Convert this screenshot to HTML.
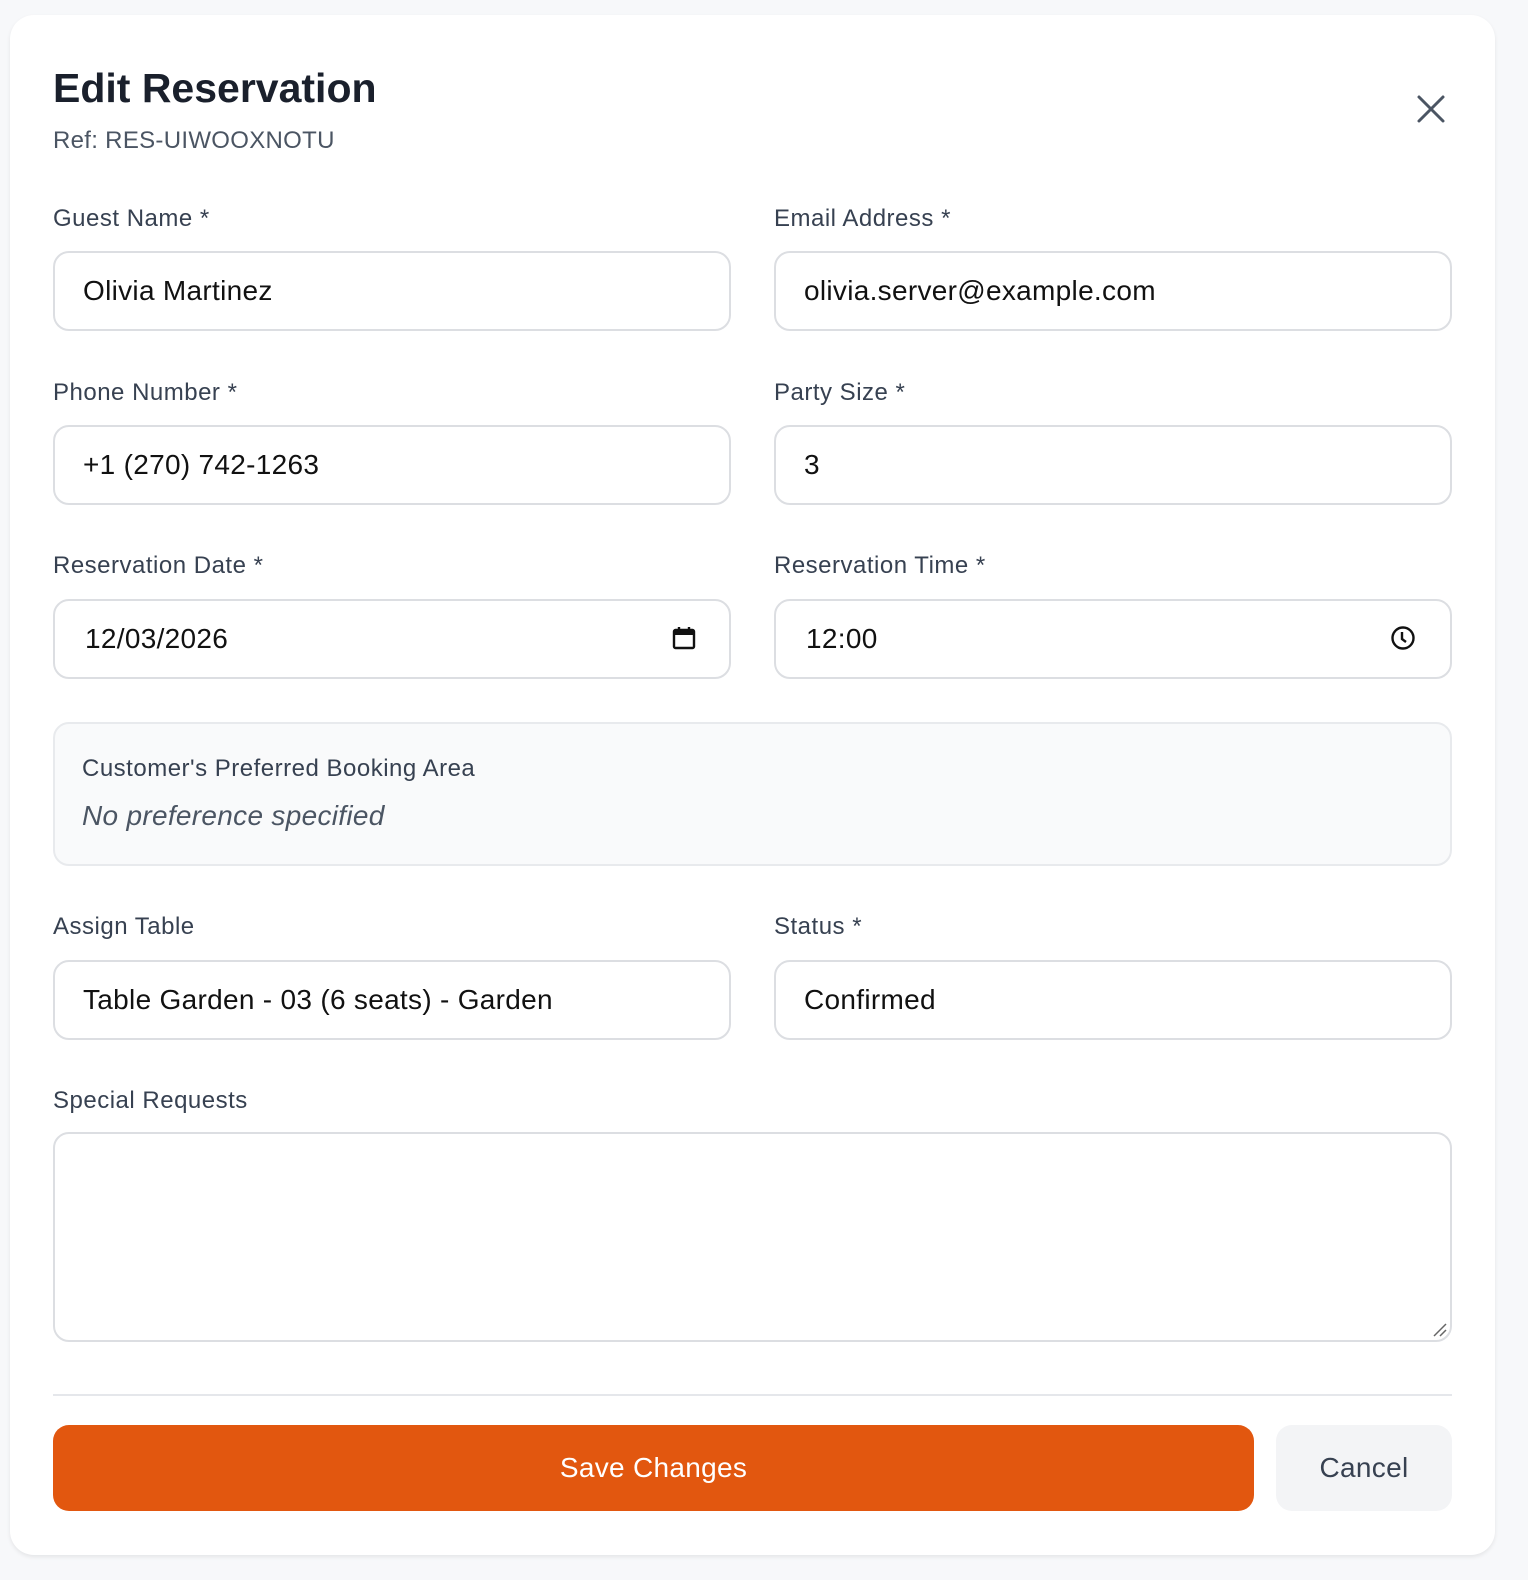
<!DOCTYPE html>
<html><head><meta charset="utf-8"><style>
*{box-sizing:border-box;margin:0;padding:0}
body{width:1528px;height:1580px;background:#f7f8fa;font-family:"Liberation Sans",sans-serif;position:relative;overflow:hidden}
.card{position:absolute;left:10px;top:15px;width:1485px;height:1540px;background:#fff;border-radius:24px;box-shadow:0 2px 4px rgba(0,0,0,.08)}
.a{position:absolute}
.lbl{position:absolute;font-size:24px;color:#374151;line-height:28px;letter-spacing:0.5px}
.in{position:absolute;height:80px;border:2px solid #dcdee2;border-radius:16px;font-size:28px;color:#111;line-height:76px;padding-left:28px;letter-spacing:0.3px}
.l{left:53px;width:678px}.r{left:774px;width:678px}
</style></head><body>
<div class="card"></div>
<div class="a" style="left:53px;top:64px;font-size:41px;font-weight:bold;color:#1a202c;line-height:48px">Edit Reservation</div>
<div class="a" style="left:53px;top:127px;font-size:24px;color:#4b5563;line-height:28px;letter-spacing:0.3px">Ref: RES-UIWOOXNOTU</div>
<svg class="a" style="left:1416px;top:94px" width="30" height="30" viewBox="0 0 30 30"><path d="M3 3L27 27M27 3L3 27" stroke="#4b5563" stroke-width="3" stroke-linecap="round"/></svg>

<div class="lbl" style="left:53px;top:205px">Guest Name *</div>
<div class="lbl" style="left:774px;top:205px">Email Address *</div>
<div class="in l" style="top:251px">Olivia Martinez</div>
<div class="in r" style="top:251px">olivia.server@example.com</div>

<div class="lbl" style="left:53px;top:379px">Phone Number *</div>
<div class="lbl" style="left:774px;top:379px">Party Size *</div>
<div class="in l" style="top:425px">+1 (270) 742-1263</div>
<div class="in r" style="top:425px">3</div>

<div class="lbl" style="left:53px;top:552px">Reservation Date *</div>
<div class="lbl" style="left:774px;top:552px">Reservation Time *</div>
<div class="in l" style="top:599px;padding-left:30px">12/03/2026</div>
<div class="in r" style="top:599px;padding-left:30px">12:00</div>
<svg class="a" style="left:671px;top:625px" width="26" height="26" viewBox="0 0 26 26"><rect x="3" y="5" width="20" height="18" rx="1.5" fill="none" stroke="#111" stroke-width="2.4"/><rect x="3" y="5" width="20" height="5" fill="#111"/><path d="M8 2v5M18 2v5" stroke="#111" stroke-width="2.4"/></svg>
<svg class="a" style="left:1390px;top:625px" width="26" height="26" viewBox="0 0 26 26"><circle cx="13" cy="13" r="10.5" fill="none" stroke="#111" stroke-width="2.4"/><path d="M12 7v7l4 3" fill="none" stroke="#111" stroke-width="2.4"/></svg>

<div class="a" style="left:53px;top:722px;width:1399px;height:144px;background:#f9fafb;border:2px solid #e8eaed;border-radius:16px"></div>
<div class="lbl" style="left:82px;top:755px">Customer's Preferred Booking Area</div>
<div class="a" style="left:82px;top:799px;font-size:28px;font-style:italic;color:#4b5563;line-height:34px;letter-spacing:0.3px">No preference specified</div>

<div class="lbl" style="left:53px;top:913px">Assign Table</div>
<div class="lbl" style="left:774px;top:913px">Status *</div>
<div class="in l" style="top:960px">Table Garden - 03 (6 seats) - Garden</div>
<div class="in r" style="top:960px">Confirmed</div>

<div class="lbl" style="left:53px;top:1087px">Special Requests</div>
<div class="a" style="left:53px;top:1132px;width:1399px;height:210px;border:2px solid #dcdee2;border-radius:16px"></div>
<svg class="a" style="left:1432px;top:1322px" width="16" height="16"><path d="M2 14L14 2M8 14L14 8" stroke="#666" stroke-width="1.5"/></svg>

<div class="a" style="left:53px;top:1394px;width:1399px;height:2px;background:#e5e7eb"></div>
<div class="a" style="left:53px;top:1425px;width:1201px;height:86px;background:#e2570f;border-radius:16px;color:#fff;font-size:28px;text-align:center;line-height:86px;letter-spacing:0.3px">Save Changes</div>
<div class="a" style="left:1276px;top:1425px;width:176px;height:86px;background:#f3f4f6;border-radius:16px;color:#374151;font-size:28px;text-align:center;line-height:86px;letter-spacing:0.3px">Cancel</div>
</body></html>
